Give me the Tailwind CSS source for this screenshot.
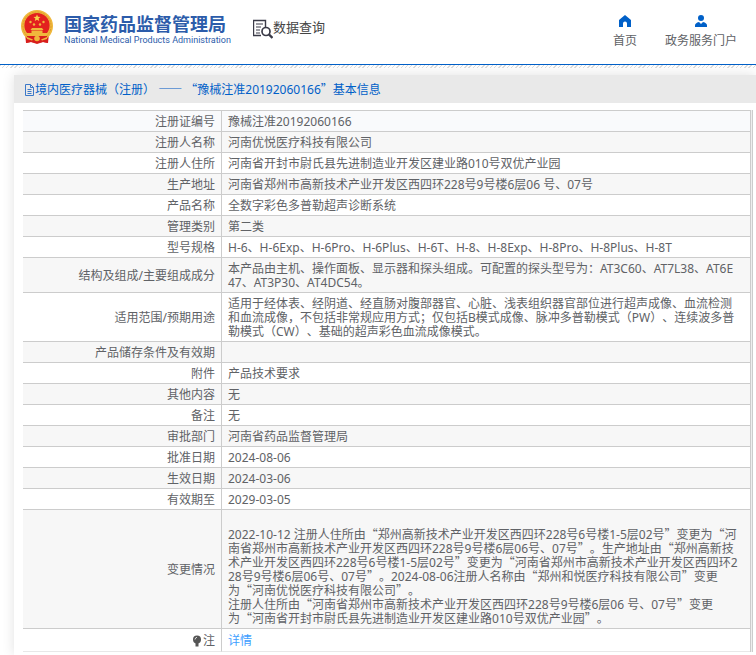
<!DOCTYPE html>
<html lang="zh-CN">
<head>
  <meta charset="UTF-8" />
  <meta name="viewport" content="width=device-width, initial-scale=1.0" />
  <title>国家药品监督管理局 - 数据查询</title>
  <script src="https://cdn.jsdelivr.net/npm/@tailwindcss/browser@4"></script>
</head>

<body class="bg-white text-[#606266] font-['Noto_Sans','Noto_Sans_CJK_SC',sans-serif] text-xs [text-spacing-trim:space-all] min-h-screen flex flex-col">
  <header class="h-[65px] shrink-0 border-b border-[#0060c8] pl-5 pr-[19px] flex items-start justify-between">
    <div class="flex items-start">
      <a href="#" class="flex items-start pt-[9px]">
        <!-- national emblem -->
        <svg class="w-[34px] h-9" viewBox="0 0 34 36">
          <path d="M5 24 L6 34 L11 33 L17 35 L23 33 L28 34 L29 24Z" fill="#d81e1c" />
          <circle cx="17" cy="17" r="16" fill="#f0b83c" />
          <circle cx="17" cy="17" r="14" fill="none" stroke="#dc9a2c" stroke-width="1" stroke-dasharray="2 1" />
          <circle cx="17" cy="16.500" r="12.600" fill="#e3201f" />
          <path d="M17 5.500l1 2.300 2.500.2-1.900 1.600.6 2.400-2.200-1.300-2.200 1.300.6-2.400-1.900-1.600 2.500-.2z" fill="#f8d34a" />
          <g fill="#f0b83c">
            <circle cx="10.500" cy="13" r="1.200" /><circle cx="23.500" cy="13" r="1.200" />
            <circle cx="14" cy="15.500" r="1.200" /><circle cx="20" cy="15.500" r="1.200" />
            <path d="M12 19h10l1.500 2H10.500zM11.500 21.500h11V24h-11zM6 24h22l-2 3H8z" />
          </g>
          <path d="M7 27h20l1 7-5-1-6 1-6-1-5 1z" fill="#d81e1c" />
          <circle cx="17" cy="29.500" r="2.800" fill="#f0b83c" />
          <path d="M7 28l6 2.500-1 1-5-1.500zM27 28l-6 2.500 1 1 5-1.500z" fill="#f0b83c" />
        </svg>
        <span class="ml-[10px] pt-[2px] flex flex-col text-[#2c5caa]">
          <span class="font-['Noto_Sans_CJK_SC',sans-serif] font-bold text-lg leading-6">国家药品监督管理局</span>
          <span class="font-[Roboto,sans-serif] text-[9px] leading-[10px]">National Medical Products Administration</span>
        </span>
      </a>
      <div class="ml-[22px] pt-[19px] flex items-start text-[#444]">
        <svg class="w-5 h-5" viewBox="0 0 20 20" fill="none" stroke="#3b3b48">
          <path d="M12.500 8V1.500h-12v15H8" stroke-width="1.400" />
          <path d="M3 5h7M3 8h5M3 11h4M3 14h4" stroke-width="1.200" />
          <circle cx="13" cy="12.500" r="4" stroke-width="1.700" />
          <path d="M16 15.500l3.500 3.500" stroke-width="2.400" />
        </svg>
        <span class="text-[13px] leading-4">数据查询</span>
      </div>
    </div>
    <nav class="flex gap-7 pt-[15px] text-xs leading-4">
      <a href="#" class="flex flex-col items-center gap-[6px]">
        <svg class="w-3 h-3" viewBox="0 0 12 12" fill="#0060c8"><path d="M6 0L0 5v7h4V8.500a2 2 0 0 1 4 0V12h4V5z" /></svg>
        首页
      </a>
      <a href="#" class="flex flex-col items-center gap-[6px]">
        <svg class="w-3 h-3" viewBox="0 0 12 12" fill="#0060c8"><circle cx="6" cy="3" r="3" /><path d="M0 12V10.500Q0 8 4 7l2 2 2-2q4 1 4 3.500V12z" /></svg>
        政务服务门户
      </a>
    </nav>
  </header>
  <div class="h-[3px] shrink-0 bg-[repeating-linear-gradient(135deg,#ddd_0px,#ddd_1px,#fff_1px,#fff_3px)]"></div>

  <main class="ml-[14px] mt-[7px] grow bg-white shadow-[0_0_12px_rgba(0,0,0,0.12)]">
    <h1 class="h-7 bg-[#e9e9e9] pl-[10px] pt-[2px] flex items-center text-xs text-[#0060c8] whitespace-pre">
      <svg class="w-[11px] h-3" viewBox="0 0 11 12" fill="none" stroke="#3b78c8"><path d="M1.500 .5h5l3 3v8h-8zM6.500 .5v3h3M3.500 5.500h4M3.500 7.500h4M3.500 9.500h4" /></svg><span>境内医疗器械（注册） <span class="font-['Noto_Sans_CJK_SC'] leading-none">——</span> <span class="font-['Noto_Sans_CJK_SC'] leading-none">“</span>豫械注准20192060166<span class="font-['Noto_Sans_CJK_SC'] leading-none">”</span>基本信息</span>
    </h1>

    <div class="ml-[9px] mr-[3px] mt-[7px] pr-px border-r border-[#ccc] bg-[#eee]">
      <table class="w-full table-fixed border-separate border-spacing-0 border-t border-r border-[#ccc] bg-white leading-[14px] [&_th]:border-r [&_th]:border-b [&_th]:border-[#ccc] [&_th]:pt-[4px] [&_th]:pb-[2px] [&_th]:pr-[6px] [&_th]:text-right [&_th]:font-normal [&_td]:border-b [&_td]:border-[#ccc] [&_td]:pt-[4px] [&_td]:pb-[2px] [&_td]:pl-[6px]">
        <colgroup><col class="w-[199px]" /><col /></colgroup>
        <tbody>
          <tr class="bg-[#f9fafc]"><th scope="row">注册证编号</th><td>豫械注准20192060166</td></tr>
          <tr class="bg-[#f7f7f7]"><th scope="row">注册人名称</th><td>河南优悦医疗科技有限公司</td></tr>
          <tr><th scope="row">注册人住所</th><td>河南省开封市尉氏县先进制造业开发区建业路010号双优产业园</td></tr>
          <tr class="bg-[#f7f7f7]"><th scope="row">生产地址</th><td>河南省郑州市高新技术产业开发区西四环228号9号楼6层06 号、07号</td></tr>
          <tr><th scope="row">产品名称</th><td>全数字彩色多普勒超声诊断系统</td></tr>
          <tr class="bg-[#f7f7f7]"><th scope="row">管理类别</th><td>第二类</td></tr>
          <tr><th scope="row">型号规格</th><td>H-6、H-6Exp、H-6Pro、H-6Plus、H-6T、H-8、H-8Exp、H-8Pro、H-8Plus、H-8T</td></tr>
          <tr class="bg-[#f7f7f7]"><th scope="row">结构及组成/主要组成成分</th><td>本产品由主机、操作面板、显示器和探头组成。可配置的探头型号为：AT3C60、AT7L38、AT6E<br />47、AT3P30、AT4DC54。</td></tr>
          <tr><th scope="row">适用范围/预期用途</th><td>适用于经体表、经阴道、经直肠对腹部器官、心脏、浅表组织器官部位进行超声成像、血流检测<br />和血流成像，不包括非常规应用方式；仅包括B模式成像、脉冲多普勒模式（PW）、连续波多普<br />勒模式（CW）、基础的超声彩色血流成像模式。</td></tr>
          <tr class="bg-[#f7f7f7]"><th scope="row">产品储存条件及有效期</th><td></td></tr>
          <tr><th scope="row">附件</th><td>产品技术要求</td></tr>
          <tr class="bg-[#f7f7f7]"><th scope="row">其他内容</th><td>无</td></tr>
          <tr><th scope="row">备注</th><td>无</td></tr>
          <tr class="bg-[#f7f7f7]"><th scope="row">审批部门</th><td>河南省药品监督管理局</td></tr>
          <tr><th scope="row">批准日期</th><td>2024-08-06</td></tr>
          <tr class="bg-[#f7f7f7]"><th scope="row">生效日期</th><td>2024-03-06</td></tr>
          <tr><th scope="row">有效期至</th><td>2029-03-05</td></tr>
          <tr class="bg-[#f7f7f7]">
            <th scope="row">变更情况</th>
            <td class="whitespace-nowrap [&_span]:font-['Noto_Sans_CJK_SC'] [&_span]:leading-none"><br />2022-10-12 注册人住所由<span>“</span>郑州高新技术产业开发区西四环228号6号楼1-5层02号<span>”</span>变更为<span>“</span>河<br />南省郑州市高新技术产业开发区西四环228号9号楼6层06号、07号<span>”</span>。生产地址由<span>“</span>郑州高新技<br />术产业开发区西四环228号6号楼1-5层02号<span>”</span>变更为<span>“</span>河南省郑州市高新技术产业开发区西四环2<br />28号9号楼6层06号、07号<span>”</span>。2024-08-06注册人名称由<span>“</span>郑州和悦医疗科技有限公司<span>”</span>变更<br />为<span>“</span>河南优悦医疗科技有限公司<span>”</span>。<br />注册人住所由<span>“</span>河南省郑州市高新技术产业开发区西四环228号9号楼6层06 号、07号<span>”</span>变更<br />为<span>“</span>河南省开封市尉氏县先进制造业开发区建业路010号双优产业园<span>”</span>。</td>
          </tr>
          <tr class="leading-4 [&>*]:border-b-[#e8e8e8]!">
            <th scope="row">
              <span class="flex items-center justify-end">
                <svg class="w-3 h-3" viewBox="0 0 12 12" fill="#555"><circle cx="6" cy="4.500" r="4" /><path d="M4.500 8h3v3.500h-3z" /><path d="M4 4.500Q4.300 2.500 6 2.300" fill="none" stroke="#ddd" /></svg>注
              </span>
            </th>
            <td><a href="#" class="text-[#409eff]">详情</a></td>
          </tr>
        </tbody>
      </table>
    </div>
  </main>
</body>
</html>
